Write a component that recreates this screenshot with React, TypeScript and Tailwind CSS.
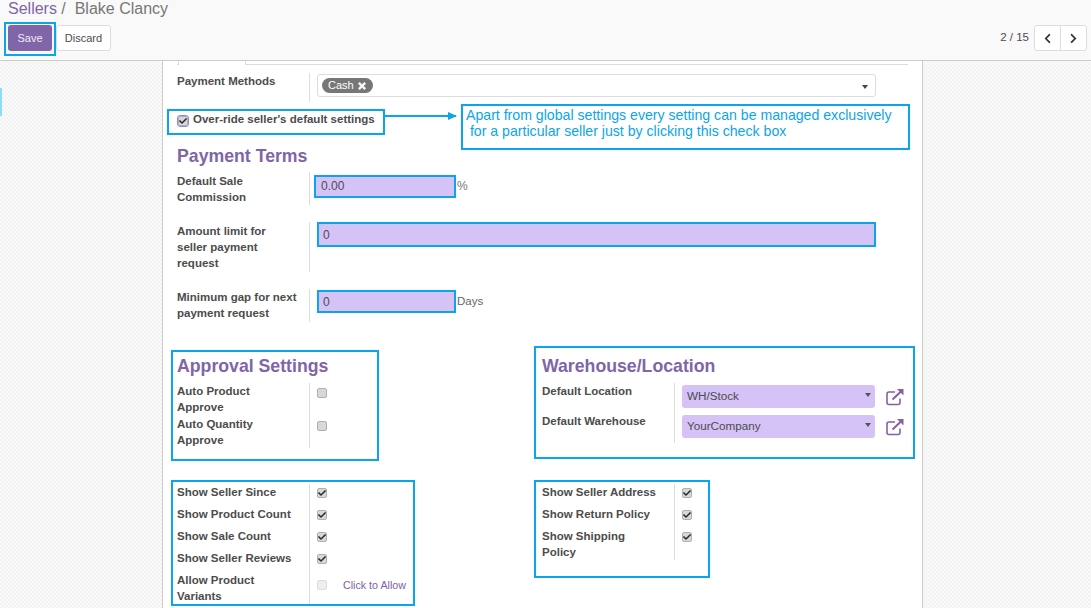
import { FaCheck, FaChevronLeft, FaChevronRight, FaTimes } from 'react-icons/fa'

const fieldLabel = 'text-[11.5px] leading-[16px] font-bold text-[#4c4c4c]'
const sectionTitle = 'text-[17.7px] font-bold leading-[22px] text-[#8065a8]'
const note = 'border-2 border-[#0ba5ec]'

const Check = ({ checked, disabled }: { checked?: boolean; disabled?: boolean }) => (
  <span
    className={`flex h-[10px] w-[10px] items-center justify-center rounded-[2px] border ${
      disabled ? 'border-[#ddd] bg-[#eee]' : 'border-[#b0b0b0] bg-[#d8d8d8]'
    }`}
  >
    {checked && <FaCheck className="h-[8px] w-[8px] text-[#2b2b2b]" />}
  </span>
)

const ExternalLink = () => (
  <svg viewBox="0 0 18 18" className="h-[18px] w-[18px] text-[#875ea8]" fill="none" stroke="currentColor">
    <path d="M14 10.5V14.5a2 2 0 0 1-2 2H3a2 2 0 0 1-2-2V6a2 2 0 0 1 2-2H9" strokeWidth="1.6" />
    <path d="M6.5 11.5 16 2.5" strokeWidth="2" />
    <path d="M11 1h6.5v6.5z" fill="currentColor" stroke="none" />
  </svg>
)

const CheckRow = ({ label, twoLine, checked = true, disabled, extra }: {
  label: string
  twoLine?: boolean
  checked?: boolean
  disabled?: boolean
  extra?: string
}) => (
  <div className={`flex ${twoLine ? 'h-[32px]' : 'h-[22px]'}`}>
    <div className={`w-[132px] whitespace-pre-line ${fieldLabel}`}>{label}</div>
    <div className={`flex flex-1 border-l border-[#ddd] pl-[7px] ${extra ? 'items-start' : 'pt-[4px]'}`}>
      {extra ? (
        <div className="flex h-[26px] items-center">
          <Check checked={checked} disabled={disabled} />
          <span className="ml-[16px] text-[10.7px] leading-[16px] text-[#8060a8]">{extra}</span>
        </div>
      ) : (
        <Check checked={checked} disabled={disabled} />
      )}
    </div>
  </div>
)

const SelectField = ({ value }: { value: string }) => (
  <div className="flex items-center">
    <div className="flex h-[23px] w-[193px] items-center justify-between rounded-[3px] bg-[#d5c3f8] pb-[1px] pl-[5px] pr-[4px] text-[11.7px] text-[#4c4c4c]">
      {value}
      <span className="mb-[3px] h-0 w-0 border-x-[3px] border-t-[4px] border-x-transparent border-t-[#555]" />
    </div>
    <span className="ml-[11px]"><ExternalLink /></span>
  </div>
)

export default function App() {
  return (
    <div className="flex h-[608px] w-[1091px] flex-col overflow-hidden bg-white font-['Liberation_Sans',Arial,sans-serif] text-[#4c4c4c]">
      {/* control panel */}
      <div className="h-[61px] shrink-0 border-b border-[#ccc] bg-[#f9f9f9] px-[4px]">
        <div className="h-[22px] pl-[4px] text-[16px] leading-[18px] text-[#777]">
          <span className="text-[#8065a8]">Sellers</span>
          <span> /&nbsp;&nbsp;Blake Clancy</span>
        </div>
        <div className="flex items-start justify-between">
          <div className="flex items-start">
            <div className={`${note} px-[2px] pb-[3px] pt-[1px]`}>
              <button className="block h-[26px] w-[44px] rounded-[3px] bg-[#8065a8] text-[11px] text-[#f0ecf5]">Save</button>
            </div>
            <button className="mt-[3px] h-[26px] w-[55px] rounded-[3px] border border-[#ddd] bg-white text-[11px] text-[#4c4c4c]">Discard</button>
          </div>
          <div className="mt-[3px] flex items-center">
            <span className="mr-[5px] text-[11.5px] text-[#4c4c4c]">2 / 15</span>
            <div className="flex h-[26px] rounded-[3px] border border-[#ddd] bg-white">
              <span className="flex w-[26px] items-center justify-center border-r border-[#ddd]"><FaChevronLeft className="h-[11px] w-[11px] text-[#333]" /></span>
              <span className="flex w-[25px] items-center justify-center"><FaChevronRight className="h-[11px] w-[11px] text-[#333]" /></span>
            </div>
          </div>
        </div>
      </div>

      {/* body */}
      <div className="relative flex-1 overflow-hidden bg-[#f6f6f6] bg-[repeating-conic-gradient(#f3f3f3_0_25%,#fafafa_0_50%)] bg-[length:4px_4px]">
        <span className="absolute left-0 top-[27px] h-[28px] w-[2px] bg-[#8fdcf8]" />
        <div className="relative ml-[162px] h-[560px] w-[761px] border-x border-[#ccc] bg-white">
          {/* tab strip */}
          <div className="ml-[14px] mr-[14px] h-[4px] border-b border-[#ddd]">
            <div className="ml-[1px] h-[4px] w-[68px] border-x border-[#ddd] bg-white" />
          </div>

          {/* payment methods */}
          <div className="mt-[8px] flex h-[29px]">
            <div className={`w-[132px] pl-[14px] ${fieldLabel}`}>Payment Methods</div>
            <div className="ml-[14px] flex-1 border-l border-[#ddd] pl-[7px] pt-[1px]">
              <div className="flex h-[23px] w-[559px] items-center justify-between rounded-[3px] border border-[#ddd] pl-[4px] pr-[7px]">
                <span className="flex h-[15px] items-center gap-[3px] rounded-full bg-[#777] px-[6px] text-[11px] text-white">
                  Cash <FaTimes className="h-[10px] w-[10px]" strokeWidth={40} />
                </span>
                <span className="mt-[2px] h-0 w-0 border-x-[3px] border-t-[4px] border-x-transparent border-t-[#444]" />
              </div>
            </div>
          </div>

          {/* override + annotation */}
          <div className="flex h-[42px] items-start">
            <div className={`${note} ml-[4px] mt-[7px] flex h-[26px] w-[218px] items-start pl-[9px]`}>
              <span className="mt-[5px] rounded-[2px] outline outline-1 outline-[#8a8ae8]"><Check checked /></span>
              <span className={`ml-[5px] ${fieldLabel}`}>Over-ride seller's default settings</span>
            </div>
            <div className="relative mt-[13px] h-[2px] w-[71px] bg-[#0ba5ec]">
              <span className="absolute -top-[3px] right-[-1px] h-0 w-0 border-y-[4px] border-l-[9px] border-y-transparent border-l-[#0ba5ec]" />
            </div>
            <div className={`${note} ml-[5px] mt-[2px] h-[46px] w-[449px] pl-[3px] pt-[1px] text-[14.13px] leading-[16px] text-[#0ba5ec]`}>
              Apart from global settings every setting can be managed exclusively
              <br />
              &nbsp;for a particular seller just by clicking this check box
            </div>
          </div>

          {/* payment terms */}
          <div className={`pl-[14px] pt-[1px] ${sectionTitle}`}>Payment Terms</div>
          <div className="mt-[5px] flex h-[33px]">
            <div className={`w-[146px] pl-[14px] pt-[1px] ${fieldLabel}`}>Default Sale<br />Commission</div>
            <div className="flex-1 border-l border-[#ddd] pl-[4px] pt-[3px]">
              <div className="flex items-center">
                <div className={`${note} h-[23px] w-[142px] bg-[#d5c3f8] pl-[5px] text-[12px] leading-[18px]`}>0.00</div>
                <span className="mb-[2px] ml-[1px] text-[12px] text-[#777]">%</span>
              </div>
            </div>
          </div>
          <div className="mt-[17px] flex h-[50px]">
            <div className={`w-[146px] pl-[14px] pt-[1px] ${fieldLabel}`}>Amount limit for<br />seller payment<br />request</div>
            <div className="flex-1 border-l border-[#ddd] pl-[7px]">
              <div className={`${note} h-[25px] w-[559px] bg-[#d5c3f8] pl-[4px] text-[12px] leading-[22px]`}>0</div>
            </div>
          </div>
          <div className="mt-[17px] flex h-[33px]">
            <div className={`w-[146px] pl-[14px] ${fieldLabel}`}>Minimum gap for next<br />payment request</div>
            <div className="flex-1 border-l border-[#ddd] pl-[7px]">
              <div className="flex items-center pt-[1px]">
                <div className={`${note} h-[23px] w-[139px] bg-[#d5c3f8] pl-[4px] text-[12px] leading-[20px]`}>0</div>
                <span className="ml-[1px] text-[11.5px] text-[#666]">Days</span>
              </div>
            </div>
          </div>

          {/* two columns */}
          <div className="mt-[24px] flex items-start">
            <div className={`${note} ml-[8px] mt-[4px] h-[111px] w-[208px] pl-[4px]`}>
              <div className={`pt-[3px] ${sectionTitle}`}>Approval Settings</div>
              <div className="mt-[6px] flex h-[65px]">
                <div className={`w-[132px] ${fieldLabel}`}>
                  Auto Product<br />Approve
                  <div className="mt-[1px]">Auto Quantity<br />Approve</div>
                </div>
                <div className="flex flex-col gap-[23px] border-l border-[#ddd] pl-[7px] pt-[5px]">
                  <Check />
                  <Check />
                </div>
              </div>
            </div>
            <div className={`${note} ml-[155px] h-[113px] w-[381px] pl-[6px]`}>
              <div className={`pt-[7px] ${sectionTitle}`}>Warehouse/Location</div>
              <div className="mt-[6px] flex h-[60px]">
                <div className={`w-[132px] ${fieldLabel}`}>
                  Default Location
                  <div className="mt-[14px]">Default Warehouse</div>
                </div>
                <div className="flex flex-col gap-[7px] border-l border-[#ddd] pl-[7px] pt-[2px]">
                  <SelectField value="WH/Stock" />
                  <SelectField value="YourCompany" />
                </div>
              </div>
            </div>
          </div>

          <div className="mt-[19px] flex items-start">
            <div className={`${note} ml-[8px] h-[126px] w-[244px] pl-[4px] pt-[2px]`}>
              <CheckRow label="Show Seller Since" />
              <CheckRow label="Show Product Count" />
              <CheckRow label="Show Sale Count" />
              <CheckRow label="Show Seller Reviews" />
              <CheckRow label={'Allow Product\nVariants'} twoLine checked={false} disabled extra="Click to Allow" />
            </div>
            <div className={`${note} ml-[119px] h-[98px] w-[176px] pl-[6px] pt-[2px]`}>
              <CheckRow label="Show Seller Address" />
              <CheckRow label="Show Return Policy" />
              <CheckRow label={'Show Shipping\nPolicy'} twoLine />
            </div>
          </div>
        </div>
      </div>
    </div>
  )
}
